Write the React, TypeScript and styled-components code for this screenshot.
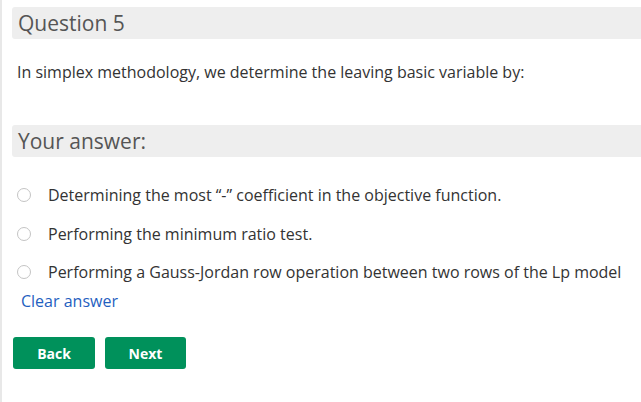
import React from "react";
import styled, { createGlobalStyle } from "styled-components";

const Global = createGlobalStyle`
  html, body { margin: 0; padding: 0; background: #fff; }
  body { font-family: "Open Sans", "Liberation Sans", sans-serif; }
`;

const Page = styled.div`
  min-height: 402px;
  box-sizing: border-box;
  border-left: 2px solid #e8e8e8;
  padding: 7px 0 0 10px;
  display: flex;
  flex-direction: column;
`;

const SectionHeader = styled.div<{ $mt?: number }>`
  background: #eeeeee;
  border-radius: 3px 0 0 3px;
  height: 32px;
  box-sizing: border-box;
  padding: 0 0 0 6px;
  display: flex;
  align-items: center;
  font-size: 21px;
  color: #555555;
  margin-top: ${(p) => p.$mt ?? 0}px;
`;

const Prompt = styled.p`
  margin: 22px 0 0 5px;
  font-size: 16px;
  line-height: 22px;
  color: #333333;
`;

const Options = styled.div`
  display: flex;
  flex-direction: column;
  margin-top: 27px;
  gap: 16.5px;
`;

const Option = styled.label`
  display: flex;
  align-items: center;
  height: 22px;
  font-size: 16px;
  color: #333333;
  cursor: pointer;
`;

const Radio = styled.span`
  width: 14px;
  height: 14px;
  border-radius: 50%;
  border: 1px solid #c4c4c4;
  box-sizing: border-box;
  margin: 0 17px 0 5px;
  flex-shrink: 0;
  background: #fff;
`;

const ClearLink = styled.a`
  margin: 7px 0 0 9px;
  font-size: 16px;
  line-height: 22px;
  color: #1f5fbf;
  text-decoration: none;
  align-self: flex-start;
`;

const Buttons = styled.div`
  display: flex;
  gap: 10px;
  margin: 25px 0 0 1px;
`;

const Button = styled.button<{ $w: number }>`
  height: 32px;
  border: none;
  border-radius: 3px;
  background: #00915b;
  color: #ffffff;
  font-family: "Open Sans", "Liberation Sans", sans-serif;
  font-weight: 700;
  font-size: 14px;
  padding: 0;
  cursor: pointer;
  width: ${(p) => p.$w}px;
`;

const options = [
  "Determining the most \u201c-\u201d coefficient in the objective function.",
  "Performing the minimum ratio test.",
  "Performing a Gauss-Jordan row operation between two rows of the Lp model",
];

export default function App() {
  return (
    <>
      <Global />
      <Page>
        <SectionHeader>Question 5</SectionHeader>
        <Prompt>In simplex methodology, we determine the leaving basic variable by:</Prompt>
        <SectionHeader $mt={42}>Your answer:</SectionHeader>
        <Options>
          {options.map((o) => (
            <Option key={o}>
              <Radio />
              {o}
            </Option>
          ))}
        </Options>
        <ClearLink href="#">Clear answer</ClearLink>
        <Buttons>
          <Button $w={82}>Back</Button>
          <Button $w={81}>Next</Button>
        </Buttons>
      </Page>
    </>
  );
}
